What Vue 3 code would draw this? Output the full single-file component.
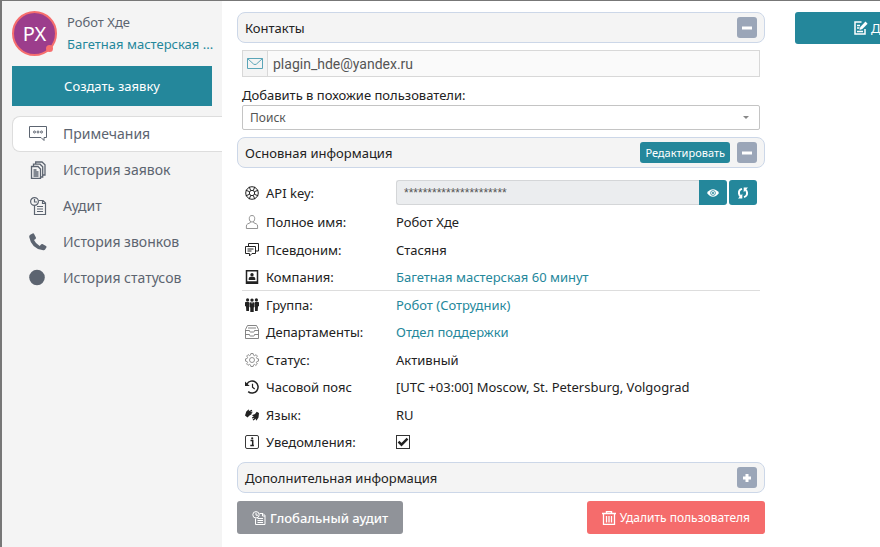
<script setup>
import { ref } from 'vue'

const menu = [
  { id: 'notes', label: 'Примечания', active: true },
  { id: 'docs', label: 'История заявок' },
  { id: 'audit', label: 'Аудит' },
  { id: 'phone', label: 'История звонков' },
  { id: 'dot', label: 'История статусов' },
]

const rows = [
  { icon: 'user', label: 'Полное имя:', value: 'Робот Хде' },
  { icon: 'chat', label: 'Псевдоним:', value: 'Стасяня' },
  { icon: 'company', label: 'Компания:', value: 'Багетная мастерская 60 минут', link: true, divider: true },
  { icon: 'group', label: 'Группа:', value: 'Робот (Сотрудник)', link: true },
  { icon: 'inbox', label: 'Департаменты:', value: 'Отдел поддержки', link: true },
  { icon: 'gear', label: 'Статус:', value: 'Активный' },
  { icon: 'history', label: 'Часовой пояс', value: '[UTC +03:00] Moscow, St. Petersburg, Volgograd' },
  { icon: 'language', label: 'Язык:', value: 'RU' },
]

const email = ref('plagin_hde@yandex.ru')
const apiKey = ref('**********************')
const notify = ref(true)
</script>

<template>
  <div class="page">
    <aside class="sidebar">
      <div class="profile">
        <div class="avatar">PX<span class="presence"></span></div>
        <div class="who">
          <span class="name">Робот Хде</span>
          <a href="#" class="org">Багетная мастерская ...</a>
        </div>
      </div>
      <button type="button" class="create">Создать заявку</button>
      <nav class="menu">
        <a v-for="m in menu" :key="m.id" href="#" class="item" :class="{ active: m.active }">
          <svg v-if="m.id === 'notes'" class="mi" viewBox="0 0 18 18" fill="none" stroke="currentColor">
            <path d="M.5 1.500h17v11h-2.500v3l-3-3H.500z" />
            <circle cx="5.500" cy="7" r="1" /><circle cx="9" cy="7" r="1" /><circle cx="12.500" cy="7" r="1" />
          </svg>
          <svg v-else-if="m.id === 'docs'" class="mi" viewBox="0 0 18 18" fill="none" stroke="currentColor" stroke-width="1.300">
            <path d="M2.500 5.500h6.500l2.500 2.500v9.500h-9zM4.500 9h3M4.500 11h5M4.500 13h5M4.500 15h5" />
            <path d="M4.500 5V3.200h6.500l2.700 2.600v10.200h-2M6.700 3V1h6.300l3 2.700v10.300h-2" />
          </svg>
          <svg v-else-if="m.id === 'audit'" class="mi" viewBox="0 0 18 18" fill="none" stroke="currentColor" stroke-width="1.200">
            <circle cx="5.500" cy="4.500" r="3.900" /><path d="M5.500 2v3H8" />
            <path d="M10 3.500h4l2.500 2.500v11.500h-11V9M13.500 3.500v3h3M8 9.500h6M8 12h6M8 14.500h6" />
          </svg>
          <svg v-else-if="m.id === 'phone'" class="mi" viewBox="0 0 18 18" fill="currentColor">
            <path d="M1.200 1.800 3.600.400Q4.600 0 5.100 1L6.900 4.500Q7.200 5.300 6.500 5.900L5 7.100Q6.700 11 10.700 12.900L12 11.400Q12.600 10.700 13.400 11.100L17 12.900Q17.900 13.500 17.500 14.300L16.100 16.600Q15.500 17.500 14.200 17.300Q2.500 16 .2 4Q0 2.500 1.200 1.800Z" />
          </svg>
          <svg v-else class="mi" viewBox="0 0 18 18" fill="currentColor"><circle cx="8" cy="8.500" r="7.800" /></svg>
          <span>{{ m.label }}</span>
        </a>
      </nav>
    </aside>

    <main class="main">
      <header class="bar">
        <h2>Контакты</h2>
        <button type="button" class="toggle" aria-label="Свернуть"><svg viewBox="0 0 10 10"><path d="M0 3.500h10v3H0z" /></svg></button>
      </header>
      <div class="contacts">
        <div class="mail">
          <label for="email" aria-label="Email">
            <svg viewBox="0 0 16 11" fill="none" stroke="currentColor"><path d="M.5.500h15v10H.500zM.500.500 6.500 6Q8 7.200 9.500 6L15.500.500" /></svg>
          </label>
          <input id="email" v-model="email" type="text" />
        </div>
        <label for="similar" class="caption">Добавить в похожие пользователи:</label>
        <div class="pick">
          <select id="similar"><option>Поиск</option></select>
          <span class="caret"></span>
        </div>
      </div>

      <header class="bar">
        <h2>Основная информация</h2>
        <button type="button" class="edit">Редактировать</button>
        <button type="button" class="toggle" aria-label="Свернуть"><svg viewBox="0 0 10 10"><path d="M0 3.500h10v3H0z" /></svg></button>
      </header>
      <table class="info">
        <tbody>
          <tr class="key">
            <th scope="row">
              <label for="api">
                <svg class="ri" viewBox="0 0 14 14" fill="none" stroke="currentColor">
                  <circle cx="7" cy="7" r="6.300" /><circle cx="7" cy="7" r="2.700" />
                  <path d="M4.200.900 5.600 4.300M.900 4.200 4.300 5.600M9.800.900 8.400 4.300M13.100 4.200 9.700 5.600M.900 9.800 4.300 8.400M4.200 13.100 5.600 9.700M9.800 13.100 8.400 9.700M13.100 9.800 9.700 8.400" />
                </svg>API key:
              </label>
            </th>
            <td>
              <div class="keybox">
                <input id="api" v-model="apiKey" type="text" readonly />
                <button type="button" class="sq joined" aria-label="Показать">
                  <svg viewBox="0 0 12 12"><path d="M0 6Q2.500 2.300 6 2.300T12 6Q9.500 9.700 6 9.700T0 6Z" fill="#fff" /><circle cx="6" cy="6" r="2.400" fill="none" stroke="#24879b" stroke-width=".8" /><circle cx="6" cy="6" r="1" fill="#24879b" /></svg>
                </button>
                <button type="button" class="sq" aria-label="Обновить">
                  <svg viewBox="0 0 12 12" fill="none" stroke="#fff" stroke-width="2"><path d="M5 1.900Q1.500 3 2 6.500 2.300 8.500 4 9.700M7 10.100Q10.500 9 10 5.500 9.700 3.500 8 2.300" /><path d="M5.300 6.800v4.700H1zM6.700 5.200V.500H11z" fill="#fff" stroke="none" /></svg>
                </button>
              </div>
            </td>
          </tr>
          <tr v-for="r in rows" :key="r.icon" :class="{ divider: r.divider }">
            <th scope="row">
              <span class="cell">
                <svg v-if="r.icon === 'user'" class="ri thin" viewBox="0 0 14 14" fill="none" stroke="currentColor" stroke-width=".8">
                  <path d="M7 .5C4.800.500 4.300 2.200 4.300 3.500 4.300 5.500 5.200 7 7 7S9.700 5.500 9.700 3.500C9.700 2.200 9.200.500 7 .5ZM5.300 6.700v1L2.500 9Q1.500 9.500 1.400 11v2.500h11.200V11Q12.500 9.500 11.500 9L8.700 7.700v-1" />
                </svg>
                <svg v-else-if="r.icon === 'chat'" class="ri" viewBox="0 0 14 14" fill="none" stroke="currentColor">
                  <path d="M3.500 3.500v-3h10v7.500H11M.500 3.500h10V10.500H7L4.500 13V10.500H.500zM2.500 6h6M2.500 8h4" />
                </svg>
                <svg v-else-if="r.icon === 'company'" class="ri" viewBox="0 0 14 14">
                  <path d="M1.500.800h11v12.400h-11z" fill="none" stroke="currentColor" stroke-width="1.500" />
                  <circle cx="7" cy="4.700" r="1.700" fill="currentColor" /><path d="M3.700 10V8.500Q4 7 5.500 6.800h3Q10 7 10.300 8.500V10zM1 11.300h12V14H1z" fill="currentColor" />
                </svg>
                <svg v-else-if="r.icon === 'group'" class="ri" viewBox="0 0 14 14" fill="currentColor">
                  <circle cx="2.600" cy="1.900" r="1.600" /><circle cx="11.400" cy="1.900" r="1.600" /><circle cx="7" cy="2.100" r="1.700" />
                  <path d="M0 4.200Q1 3.700 2.600 3.700L4.200 4.200 4 9.500V13H1.300L1 8.500 0 8zM14 4.200Q13 3.700 11.400 3.700L9.800 4.200 10 9.500V13H12.700L13 8.500 14 8zM4.500 4.700 6.300 4.100 7 6 7.700 4.100 9.500 4.700V9L8.700 9.500V14H5.300V9.500L4.500 9z" />
                </svg>
                <svg v-else-if="r.icon === 'inbox'" class="ri thin" viewBox="0 0 14 14" fill="none" stroke="currentColor" stroke-width=".9">
                  <path d="M2.500.500h9L13.500 4.500V13.500H.500V4.500zM.500 5.500H4.500Q4.500 7 5.500 7h3Q9.500 7 9.500 5.500h4M.500 9.500H4.500Q4.500 11 5.500 11h3Q9.500 11 9.500 9.500h4M3 3h8" />
                </svg>
                <svg v-else-if="r.icon === 'gear'" class="ri thin" viewBox="0 0 14 14" fill="none" stroke="currentColor" stroke-width=".8">
                  <path d="M5.900.500h2.200l.4 1.700 1.100.5L11.100 1.700 12.400 3.100 11.400 4.500 11.900 5.600 13.500 5.900v2.200L11.900 8.500 11.400 9.600 12.300 11 10.900 12.400 9.500 11.400 8.500 11.900 8.100 13.500H5.900L5.500 11.900 4.400 11.400 3 12.300 1.600 10.900 2.600 9.500 2.100 8.500.500 8.100V5.900L2.100 5.500 2.600 4.400 1.700 3 3.100 1.600 4.500 2.600 5.500 2.100z" /><circle cx="7" cy="7" r="2.500" />
                </svg>
                <svg v-else-if="r.icon === 'history'" class="ri" viewBox="0 0 14 14" fill="none" stroke="currentColor" stroke-width="1.500">
                  <path d="M2 3.800A6 6 0 1 1 3.200 11.600" /><path d="M7.500 3.800V7.300L9.700 9" stroke-width="1.200" /><path d="M0 1.500V6H4.700z" fill="currentColor" stroke="none" />
                </svg>
                <svg v-else class="ri" viewBox="0 0 14 14" fill="currentColor">
                  <path d="M0 7.500 1.300 3.500 3.500 1.500 4.200 2 3.500 3.200 6.800 1.800 7.200 2.700 5 4 7.300 3.500 7.500 4.500 5.300 5.300 6.800 5.200 6.900 6.100 4.500 7.500 2.500 9.500z" />
                  <path d="M14 5 13.500 9.500 11.500 12.500 10.700 12 11.200 10.500 8.300 12.500 7.600 11.700 9.500 9.700 7.300 10.500 6.900 9.500 8.900 8.300 7.400 8.100 7.400 7.100 10 6 11.700 3.700z" />
                </svg>
                {{ r.label }}
              </span>
            </th>
            <td><a v-if="r.link" href="#">{{ r.value }}</a><template v-else>{{ r.value }}</template></td>
          </tr>
          <tr>
            <th scope="row">
              <label for="notify">
                <svg class="ri" viewBox="0 0 14 14" fill="none" stroke="currentColor" stroke-width=".9">
                  <rect x=".5" y=".5" width="13" height="13" rx="1.500" /><path d="M5.500 5.500h2.200V10.500M5.300 10.500h3.600" stroke-width="1.500" /><circle cx="7.200" cy="3.300" r="1.100" fill="currentColor" stroke="none" />
                </svg>Уведомления:
              </label>
            </th>
            <td>
              <span class="check">
                <input id="notify" v-model="notify" type="checkbox" />
                <svg v-if="notify" viewBox="0 0 14 14"><path d="M2.500 6.700 5.500 9.700 11.500 3.700" fill="none" stroke="#222" stroke-width="2.400" /></svg>
              </span>
            </td>
          </tr>
        </tbody>
      </table>

      <header class="bar">
        <h2>Дополнительная информация</h2>
        <button type="button" class="toggle" aria-label="Развернуть"><svg viewBox="0 0 10 10"><path d="M1 3.500h2.500V1h3v2.500H9v3H6.500V9h-3V6.500H1z" /></svg></button>
      </header>
      <footer class="actions">
        <button type="button" class="act grey">
          <svg viewBox="0 0 14 14" fill="none" stroke="#fff"><circle cx="4" cy="3.800" r="3.200" /><path d="M4 1.800v2.400h2M7.500 2.500h3.500l2 2v9H3.500V7.500M10.500 2.500v2.500H13M5.500 7.500h5.500M5.500 9.500h5.500M5.500 11.500h5.500" /></svg>
          Глобальный аудит
        </button>
        <button type="button" class="act red">
          <svg viewBox="0 0 14 14" fill="none" stroke="#fff"><path d="M0 2.500h14M4.500 2V.500h5V2" stroke-width="1.400" /><path d="M1.500 2.500V13.300h11V2.500M4.500 5v6.500M7 5v6.500M9.500 5v6.500" stroke-width="1.300" /></svg>
          Удалить пользователя
        </button>
      </footer>
    </main>

    <section class="side">
      <button type="button" class="add">
        <svg viewBox="0 0 14 14" fill="none" stroke="#fff"><path d="M7.500 1H1v12h10V8M3 4.500h3M3 7h2.500M3 10.500h6" stroke-width="1.500" /><path d="M5.500 9 6.300 6 11.500.600 13.600 2.700 8.400 8z" fill="#fff" stroke="none" /></svg>
        До
      </button>
    </section>
  </div>
</template>

<style>
body {
  background: #fff;
}
</style>

<style scoped>
.page {
  display: flex;
  min-height: 100vh;
  box-sizing: border-box;
  overflow: hidden;
  border-top: 1px solid #777;
  border-left: 2px solid #777;
  font: 14px/20px "Noto Sans", sans-serif;
  color: #222;
}
.page *, .page *::before {
  box-sizing: border-box;
}
button, input, select {
  font: inherit;
  margin: 0;
}
button {
  border: 0;
  padding: 0;
  color: #fff;
  background: #24879b;
  cursor: pointer;
  white-space: nowrap;
}
svg {
  display: block;
  flex: none;
}
a {
  color: #24879b;
  text-decoration: none;
}
.sidebar {
  flex: 0 0 220px;
  min-width: 0;
  background: #f4f4f4;
  padding: 10px 0 0 10px;
  color: #5c6470;
}
.profile {
  display: flex;
  gap: 10px;
}
.avatar {
  position: relative;
  flex: none;
  width: 45px;
  height: 45px;
  border: 2px solid #f66e6e;
  border-radius: 50%;
  background: #9c3d8c;
  color: #fff;
  font-size: 20px;
  line-height: 41px;
  text-align: center;
}
.presence {
  position: absolute;
  right: 2px;
  bottom: 2px;
  width: 7px;
  height: 7px;
  border-radius: 50%;
  background: #f66e6e;
}
.who {
  display: flex;
  flex-direction: column;
  font-size: 13px;
  line-height: 22px;
  white-space: nowrap;
}
.create {
  display: block;
  width: calc(100% - 10px);
  height: 40px;
  margin: 10px 0;
  font-size: 13px;
}
.item {
  display: flex;
  align-items: center;
  gap: 16px;
  height: 36px;
  padding-left: 16px;
  border: 1px solid transparent;
  border-right: 0;
  border-radius: 8px 0 0 8px;
  color: #5c6470;
}
.item.active {
  background: #fff;
  border-color: #ddd;
}
.mi {
  width: 18px;
  height: 18px;
}
.main {
  flex: 1;
  min-width: 0;
  padding: 11px 0 0 15px;
  font-size: 13px;
}
.bar {
  display: flex;
  align-items: center;
  gap: 7px;
  height: 31px;
  padding: 0 7px;
  border: 1px solid #ccd7e8;
  border-radius: 8px;
  background: #f4f4f4;
}
h2 {
  flex: 1;
  margin: 0;
  font-size: 13px;
  font-weight: 400;
}
.toggle {
  display: grid;
  place-items: center;
  width: 20px;
  height: 21px;
  border-radius: 3px;
  background: #9ba6b8;
}
.toggle svg {
  width: 10px;
  height: 10px;
  fill: #fff;
}
.edit {
  height: 21px;
  padding: 0 5px;
  border-radius: 3px;
  font-size: 11px;
}
.contacts {
  padding: 7px 5px;
}
.mail {
  display: flex;
  height: 27px;
  border: 1px solid #d8d8d8;
}
.mail label {
  display: grid;
  place-items: center;
  width: 25px;
  border-right: 1px solid #d8d8d8;
  background: #f4f4f4;
  color: #5aa5b8;
}
.mail svg {
  width: 16px;
  height: 11px;
}
.mail input {
  flex: 1;
  min-width: 0;
  border: 0;
  padding: 0 5px;
  background: #fafafa;
  color: #555;
  font: 14px Roboto, sans-serif;
}
.caption {
  display: block;
  padding-top: 8px;
}
.pick {
  position: relative;
}
.pick select {
  display: block;
  width: 100%;
  height: 25px;
  padding: 0 7px;
  appearance: none;
  border: 1px solid #c4c4c4;
  border-radius: 2px;
  background: #fff;
  color: #555;
  font-size: 12px;
}
.caret {
  position: absolute;
  right: 11px;
  top: 11px;
  border: 3px solid transparent;
  border-top-color: #888;
  border-bottom: 0;
  pointer-events: none;
}
.info {
  width: calc(100% - 10px);
  margin: 9px 5px 6px;
  border-collapse: separate;
  border-spacing: 0;
}
tr {
  height: 27px;
}
tr:nth-child(even) {
  height: 28px;
}
tr.key {
  height: 31px;
}
th, td {
  padding: 0;
  font-weight: 400;
  text-align: left;
  vertical-align: middle;
}
th {
  width: 154px;
}
.divider th, .divider td {
  border-bottom: 1px solid #ddd;
}
.cell, th label {
  display: flex;
  align-items: center;
  gap: 7px;
  padding-left: 3px;
}
.ri {
  width: 14px;
  height: 14px;
}
.thin {
  color: #777;
}
.keybox {
  display: flex;
  height: 25px;
  padding-right: 3px;
}
.keybox input {
  flex: 1;
  min-width: 0;
  border: 1px solid #d4d6d8;
  border-right: 0;
  border-radius: 3px 0 0 3px;
  padding: 0 7px;
  background: #ebedef;
  color: #555;
  font: 12px "Liberation Sans", sans-serif;
}
.sq {
  display: grid;
  place-items: center;
  width: 28px;
  margin-left: 2px;
  border-radius: 3px;
}
.sq.joined {
  margin-left: 0;
  border-radius: 0 3px 3px 0;
}
.sq svg {
  width: 12px;
  height: 12px;
}
.check {
  position: relative;
  display: block;
  width: 14px;
  height: 14px;
}
.check input {
  display: block;
  width: 14px;
  height: 14px;
  appearance: none;
  border: 1px solid #333;
  background: #fff;
}
.check svg {
  position: absolute;
  inset: 0;
  pointer-events: none;
}
.actions {
  display: flex;
  justify-content: space-between;
  padding-top: 8px;
}
.act {
  display: flex;
  align-items: center;
  gap: 4px;
  height: 33px;
  padding: 0 15px;
  border-radius: 3px;
}
.act svg {
  width: 14px;
  height: 14px;
}
.grey {
  background: #909399;
  font-weight: 500;
}
.red {
  background: #f56c6c;
  font-size: 12px;
}
.side {
  flex: 0 0 85px;
  margin-left: 30px;
  padding-top: 11px;
  overflow: hidden;
}
.add {
  display: flex;
  align-items: center;
  gap: 3px;
  width: 200px;
  height: 32px;
  padding-left: 59px;
  border-radius: 3px;
  font-size: 13px;
}
.add svg {
  width: 14px;
  height: 14px;
}
</style>
